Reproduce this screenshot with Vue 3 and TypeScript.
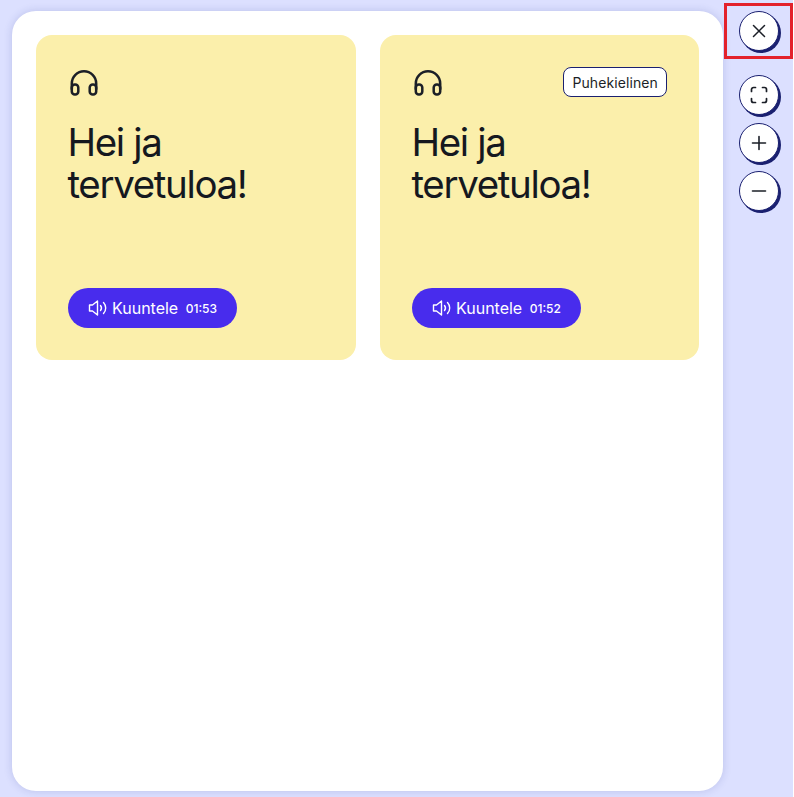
<script setup lang="ts">
interface Card {
  duration: string
  tag?: string
}
const cards: Card[] = [
  { duration: '01:53' },
  { duration: '01:52', tag: 'Puhekielinen' },
]
</script>

<template>
  <div class="page">
    <main class="panel">
      <section class="grid">
        <article v-for="card in cards" :key="card.duration" class="card">
          <div class="top">
            <svg class="head" viewBox="0 0 32 32" fill="none" stroke="currentColor" stroke-width="2.5" stroke-linecap="round" stroke-linejoin="round">
              <path d="M3.8 22v-5.6a12.2 12.2 0 0 1 24.4 0V22" />
              <rect x="3.8" y="17.5" width="6.5" height="10" rx="3" />
              <rect x="21.7" y="17.5" width="6.5" height="10" rx="3" />
            </svg>
            <span v-if="card.tag" class="tag">{{ card.tag }}</span>
          </div>
          <h1>Hei ja<br />tervetuloa!</h1>
          <button class="listen">
            <svg class="speaker" viewBox="0 0 20 20" fill="none" stroke="currentColor" stroke-width="1.4" stroke-linejoin="round" stroke-linecap="round">
              <path d="M1.5 7v6h3l5 4V3l-5 4z" />
              <path d="M12.5 7.5a4 4 0 0 1 0 5" />
              <path d="M15.5 4.5a8 8 0 0 1 0 11" />
            </svg>
            <span class="label">Kuuntele</span>
            <span class="time">{{ card.duration }}</span>
          </button>
        </article>
      </section>
    </main>
    <aside class="side">
      <button class="round close">
        <svg viewBox="0 0 20 20" fill="none" stroke="currentColor" stroke-width="1.5" stroke-linecap="round"><path d="M4.5 4.5l11 11M15.5 4.5l-11 11" /></svg>
      </button>
      <div class="tools">
        <button class="round">
          <svg viewBox="0 0 20 20" fill="none" stroke="currentColor" stroke-width="1.7" stroke-linecap="round" stroke-linejoin="round"><path d="M2.5 6.5V4.5a2 2 0 0 1 2-2h2M13.5 2.5h2a2 2 0 0 1 2 2v2M17.5 13.5v2a2 2 0 0 1-2 2h-2M6.5 17.5h-2a2 2 0 0 1-2-2v-2" /></svg>
        </button>
        <button class="round">
          <svg viewBox="0 0 20 20" fill="none" stroke="currentColor" stroke-width="1.6" stroke-linecap="round"><path d="M3.5 10h13M10 3.5v13" /></svg>
        </button>
        <button class="round">
          <svg viewBox="0 0 20 20" fill="none" stroke="currentColor" stroke-width="1.6" stroke-linecap="round"><path d="M3.5 10h13" /></svg>
        </button>
      </div>
    </aside>
    <div class="highlight"></div>
  </div>
</template>

<style>
html, body { margin: 0; background: #fff; }
</style>

<style scoped>
.page {
  position: relative;
  width: 793px;
  height: 797px;
  box-sizing: border-box;
  background: #dce0ff;
  display: flex;
  padding: 11px 0 6px 12px;
  overflow: hidden;
  font-family: "Inter", "Noto Sans", sans-serif;
  color: #1b1f27;
}
.panel {
  width: 711px;
  height: 780px;
  box-sizing: border-box;
  background: #fff;
  border-radius: 24px;
  box-shadow: 0 0 8px rgba(40, 50, 140, 0.18);
  padding: 24px;
}
.grid {
  display: grid;
  grid-template-columns: 320px 319px;
  gap: 24px;
}
.card {
  height: 325px;
  box-sizing: border-box;
  background: #fbefab;
  border-radius: 16px;
  padding: 32px;
  display: flex;
  flex-direction: column;
  align-items: flex-start;
}
.top {
  align-self: stretch;
  height: 32px;
  display: flex;
  justify-content: space-between;
  align-items: flex-start;
}
.head { width: 32px; height: 32px; }
.tag {
  height: 30px;
  box-sizing: border-box;
  padding: 0 8px;
  display: flex;
  align-items: center;
  background: #fff;
  border: 1px solid #1a2070;
  border-radius: 8px;
  font-size: 14px;
  letter-spacing: 0.1px;
}
h1 {
  margin: 22px 0 0 -0.5px;
  font-size: 38.5px;
  line-height: 42px;
  font-weight: 430;
  letter-spacing: -1.35px;
  color: #15181f;
}
.listen {
  margin-top: auto;
  height: 40px;
  padding: 0 20px;
  border: 0;
  border-radius: 20px;
  background: #482ced;
  color: #fff;
  display: flex;
  align-items: center;
  font-family: inherit;
}
.speaker { width: 20px; height: 20px; margin-right: 4px; }
.label { font-size: 16px; font-weight: 420; }
.time { font-size: 12px; font-weight: 450; margin-left: 7.5px; }
.side {
  flex: 1;
  display: flex;
  flex-direction: column;
  align-items: flex-start;
  padding-left: 16px;
}
.tools {
  margin-top: 24px;
  display: flex;
  flex-direction: column;
  gap: 8px;
}
.round {
  width: 40px;
  height: 40px;
  padding: 0;
  box-sizing: border-box;
  border-radius: 50%;
  background: #fff;
  border: 1px solid #1a2070;
  box-shadow: 2px 2px 0 #1a2070;
  color: #1b1f27;
  display: flex;
  align-items: center;
  justify-content: center;
}
.round svg { width: 20px; height: 20px; }
.highlight {
  position: absolute;
  left: 724px;
  top: 3px;
  width: 69px;
  height: 56px;
  box-sizing: border-box;
  border: 3px solid #e3212b;
}
</style>
